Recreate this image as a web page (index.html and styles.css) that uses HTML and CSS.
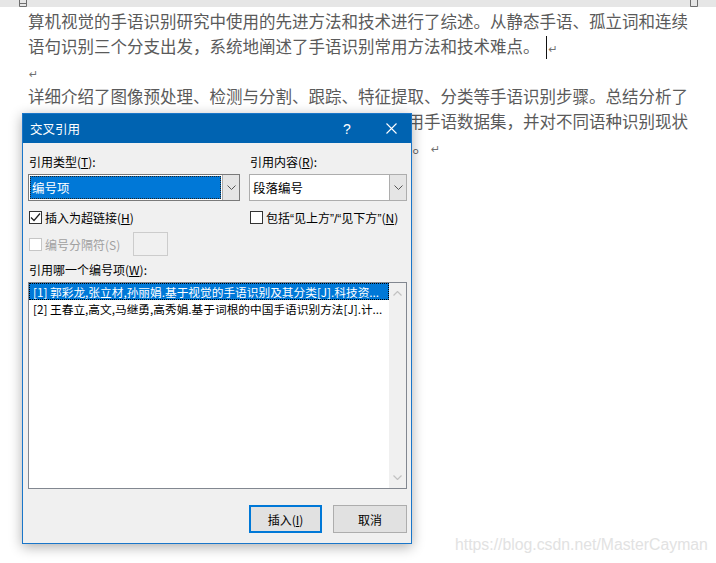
FILE: index.html
```html
<!DOCTYPE html>
<html lang="zh-CN">
<head>
<meta charset="utf-8">
<title>交叉引用</title>
<link rel="stylesheet" href="styles.css">
</head>
<body>
<div class="topbar">
  <svg class="handle" width="8" height="7" viewBox="0 0 8 7"><path d="M0.5 0 V6.5 H7.5 V0 M0.5 3.5 H7.5" fill="none" stroke="#6e6e6e" stroke-width="1"/></svg>
  <svg class="handle" width="8" height="7" viewBox="0 0 8 7"><path d="M0.5 0 V6.5 H7.5 V0" fill="none" stroke="#6e6e6e" stroke-width="1"/></svg>
</div>
<div class="doc">
  <div class="line">算机视觉的手语识别研究中使用的先进方法和技术进行了综述。从静态手语、孤立词和连续</div>
  <div class="line">语句识别三个分支出发，系统地阐述了手语识别常用方法和技术难点。<span class="cursor"></span><span class="pm">↵</span></div>
  <div class="line"><span class="pm first">↵</span></div>
  <div class="line">详细介绍了图像预处理、检测与分割、跟踪、特征提取、分类等手语识别步骤。总结分析了</div>
  <div class="line"><span class="under">了手语识别的研究现状与发展趋势，列举了国内外常</span>用手语数据集，并对不同语种识别现状</div>
  <div class="line"><span class="under">进行了对比分析，最后展望了手语识别未来研究方向</span><span class="stop">。</span><span class="pm">↵</span></div>
</div>

<div class="dialog">
  <div class="titlebar">
    <span class="title">交叉引用</span>
    <span class="tbtn help">?</span>
    <span class="tbtn close"><svg width="11" height="11" viewBox="0 0 11 11"><path d="M0.5 0.5 L10.5 10.5 M10.5 0.5 L0.5 10.5" stroke="#fff" stroke-width="1.1"/></svg></span>
  </div>
  <div class="form">
    <div class="grid">
      <div class="col">
        <div class="lbl">引用类型(<u>T</u>):</div>
        <div class="combo focus">
          <div class="val">编号项</div>
          <div class="dd"><svg width="9" height="5" viewBox="0 0 9 5"><path d="M0.5 0.5 L4.5 4.5 L8.5 0.5" fill="none" stroke="#555" stroke-width="1"/></svg></div>
        </div>
        <div class="chkrow">
          <span class="cb"><svg width="11" height="11" viewBox="0 0 11 11"><path d="M1 5.5 L4 8.5 L10 1.5" fill="none" stroke="#222" stroke-width="1.2"/></svg></span>
          <span>插入为超链接(<u>H</u>)</span>
        </div>
      </div>
      <div class="col">
        <div class="lbl">引用内容(<u>R</u>):</div>
        <div class="combo">
          <div class="val">段落编号</div>
          <div class="dd"><svg width="9" height="5" viewBox="0 0 9 5"><path d="M0.5 0.5 L4.5 4.5 L8.5 0.5" fill="none" stroke="#555" stroke-width="1"/></svg></div>
        </div>
        <div class="chkrow">
          <span class="cb"></span>
          <span>包括<span class="q">“</span>见上方<span class="q">”/“</span>见下方<span class="q">”</span>(<u>N</u>)</span>
        </div>
      </div>
    </div>
    <div class="seprow">
      <span class="cb disabled"></span>
      <span class="seplbl">编号分隔符(S)</span>
      <span class="sepbox"></span>
    </div>
    <div class="lbl wlbl">引用哪一个编号项(<u>W</u>):</div>
    <div class="list">
      <div class="items">
        <div class="item sel">[1] 郭彩龙,张立材,孙丽娟.基于视觉的手语识别及其分类[J].科技资...</div>
        <div class="item">[2] 王春立,高文,马继勇,高秀娟.基于词根的中国手语识别方法[J].计...</div>
      </div>
      <div class="vscroll">
        <svg width="9" height="5" viewBox="0 0 9 5"><path d="M0.5 4.5 L4.5 0.5 L8.5 4.5" fill="none" stroke="#c2c2c2" stroke-width="1.2"/></svg>
        <svg width="9" height="5" viewBox="0 0 9 5"><path d="M0.5 0.5 L4.5 4.5 L8.5 0.5" fill="none" stroke="#c2c2c2" stroke-width="1.2"/></svg>
      </div>
    </div>
    <div class="buttons">
      <div class="button default">插入(<u>I</u>)</div>
      <div class="button cancel">取消</div>
    </div>
  </div>
</div>

<div class="watermark">https://blog.csdn.net/MasterCayman</div>
</body>
</html>
```
FILE: styles.css
```css
* { box-sizing: border-box; }
html, body { margin: 0; padding: 0; }
body {
  width: 716px;
  height: 563px;
  overflow: hidden;
  position: relative;
  background: #fff;
  font-family: "Noto Sans CJK SC", "Liberation Sans", sans-serif;
}
.topbar {
  height: 7px;
  background: #e6e6e6;
  display: flex;
  justify-content: space-between;
  padding: 0 18px 0 19px;
}
.handle { display: block; }

.doc {
  padding: 2px 0 0 28px;
  color: #5a5a5a;
  font-size: 16.5px;
  line-height: 25px;
}
.line { height: 25px; white-space: nowrap; }
.under { visibility: hidden; }
.pm {
  font-family: "DejaVu Sans", sans-serif;
  font-size: 11px;
  color: #707070;
  margin-left: 2px;
}
.pm.first { margin-left: 1px; }
.stop { margin-left: 5px; }
.cursor {
  display: inline-block;
  width: 1px;
  height: 23px;
  background: #111;
  vertical-align: -6px;
  margin-left: 6px;
}

.dialog {
  position: absolute;
  left: 22px;
  top: 113px;
  width: 390px;
  height: 431px;
  border: 1px solid #1a76c9;
  background: #f0f0f0;
  box-shadow: 0 3px 12px rgba(0, 0, 0, 0.32);
  font-size: 12px;
  color: #000;
}
.titlebar {
  height: 29px;
  background: #0063b1;
  color: #fff;
  display: flex;
  align-items: center;
  padding-left: 7px;
}
.title { flex: 1; font-size: 12.5px; }
.tbtn {
  width: 40px;
  height: 29px;
  display: flex;
  align-items: center;
  justify-content: center;
}
.help { margin-right: 4px; font-size: 14px; font-family: "Liberation Sans", sans-serif; }

.form { padding: 11px 4px 0 5px; }
.grid {
  display: grid;
  grid-template-columns: 212px 158px;
  column-gap: 9px;
}
.lbl { line-height: 16px; padding-left: 1px; white-space: nowrap; }
.combo {
  margin-top: 4px;
  height: 27px;
  border: 1px solid #adadad;
  background: #fff;
  display: flex;
}
.combo .val {
  flex: 1;
  margin: 1px;
  padding-left: 2px;
  line-height: 23px;
  font-size: 12.5px;
}
.combo.focus { border-color: #7a7a7a; }
.combo.focus .val {
  background: #0078d7;
  color: #fff;
  outline: 1px dotted #222;
  outline-offset: -1px;
}
.combo .dd {
  width: 17px;
  background: #e5e5e5;
  border-left: 1px solid #adadad;
  display: flex;
  align-items: center;
  justify-content: center;
}
.chkrow {
  margin-top: 8px;
  height: 16px;
  display: flex;
  align-items: center;
  white-space: nowrap;
}
.q { font-family: "Liberation Sans", sans-serif; }
.cb {
  flex: none;
  width: 13px;
  height: 13px;
  border: 1px solid #333;
  background: #fff;
  margin-left: 1px;
  margin-right: 3px;
  display: flex;
  align-items: center;
  justify-content: center;
}
.cb.disabled { border-color: #c6c6c6; background: #fff; }
.seprow {
  margin-top: 7px;
  height: 24px;
  display: flex;
  align-items: center;
}
.seplbl { width: 88px; color: #a0a0a0; }
.sepbox {
  width: 35px;
  height: 24px;
  border: 1px solid #cccccc;
  background: #f0f0f0;
}
.wlbl { margin-top: 6px; }
.list {
  margin-top: 4px;
  height: 207px;
  border: 1px solid #828790;
  background: #fff;
  display: flex;
}
.items { flex: 1; min-width: 0; }
.item {
  height: 17px;
  line-height: 17px;
  padding-left: 4px;
  font-size: 11.7px;
  white-space: nowrap;
}
.item.sel {
  background: #0078d7;
  color: #fff;
  outline: 1px dotted #000;
  outline-offset: -1px;
}
.vscroll {
  width: 17px;
  background: #f0f0f0;
  display: flex;
  flex-direction: column;
  justify-content: space-between;
  align-items: center;
  padding: 8px 0 8px;
}
.vscroll svg { display: block; }
.buttons {
  margin-top: 16px;
  display: flex;
  justify-content: flex-end;
  gap: 11px;
}
.button {
  height: 28px;
  background: #e1e1e1;
  display: flex;
  align-items: center;
  justify-content: center;
}
.button.default { width: 73px; border: 2px solid #0078d7; }
.button.cancel { width: 74px; border: 1px solid #adadad; }

.watermark {
  position: absolute;
  left: 455px;
  top: 535px;
  font-family: "Liberation Sans", sans-serif;
  font-size: 15.8px;
  line-height: 20px;
  color: #e2e2e2;
  white-space: nowrap;
}
```
